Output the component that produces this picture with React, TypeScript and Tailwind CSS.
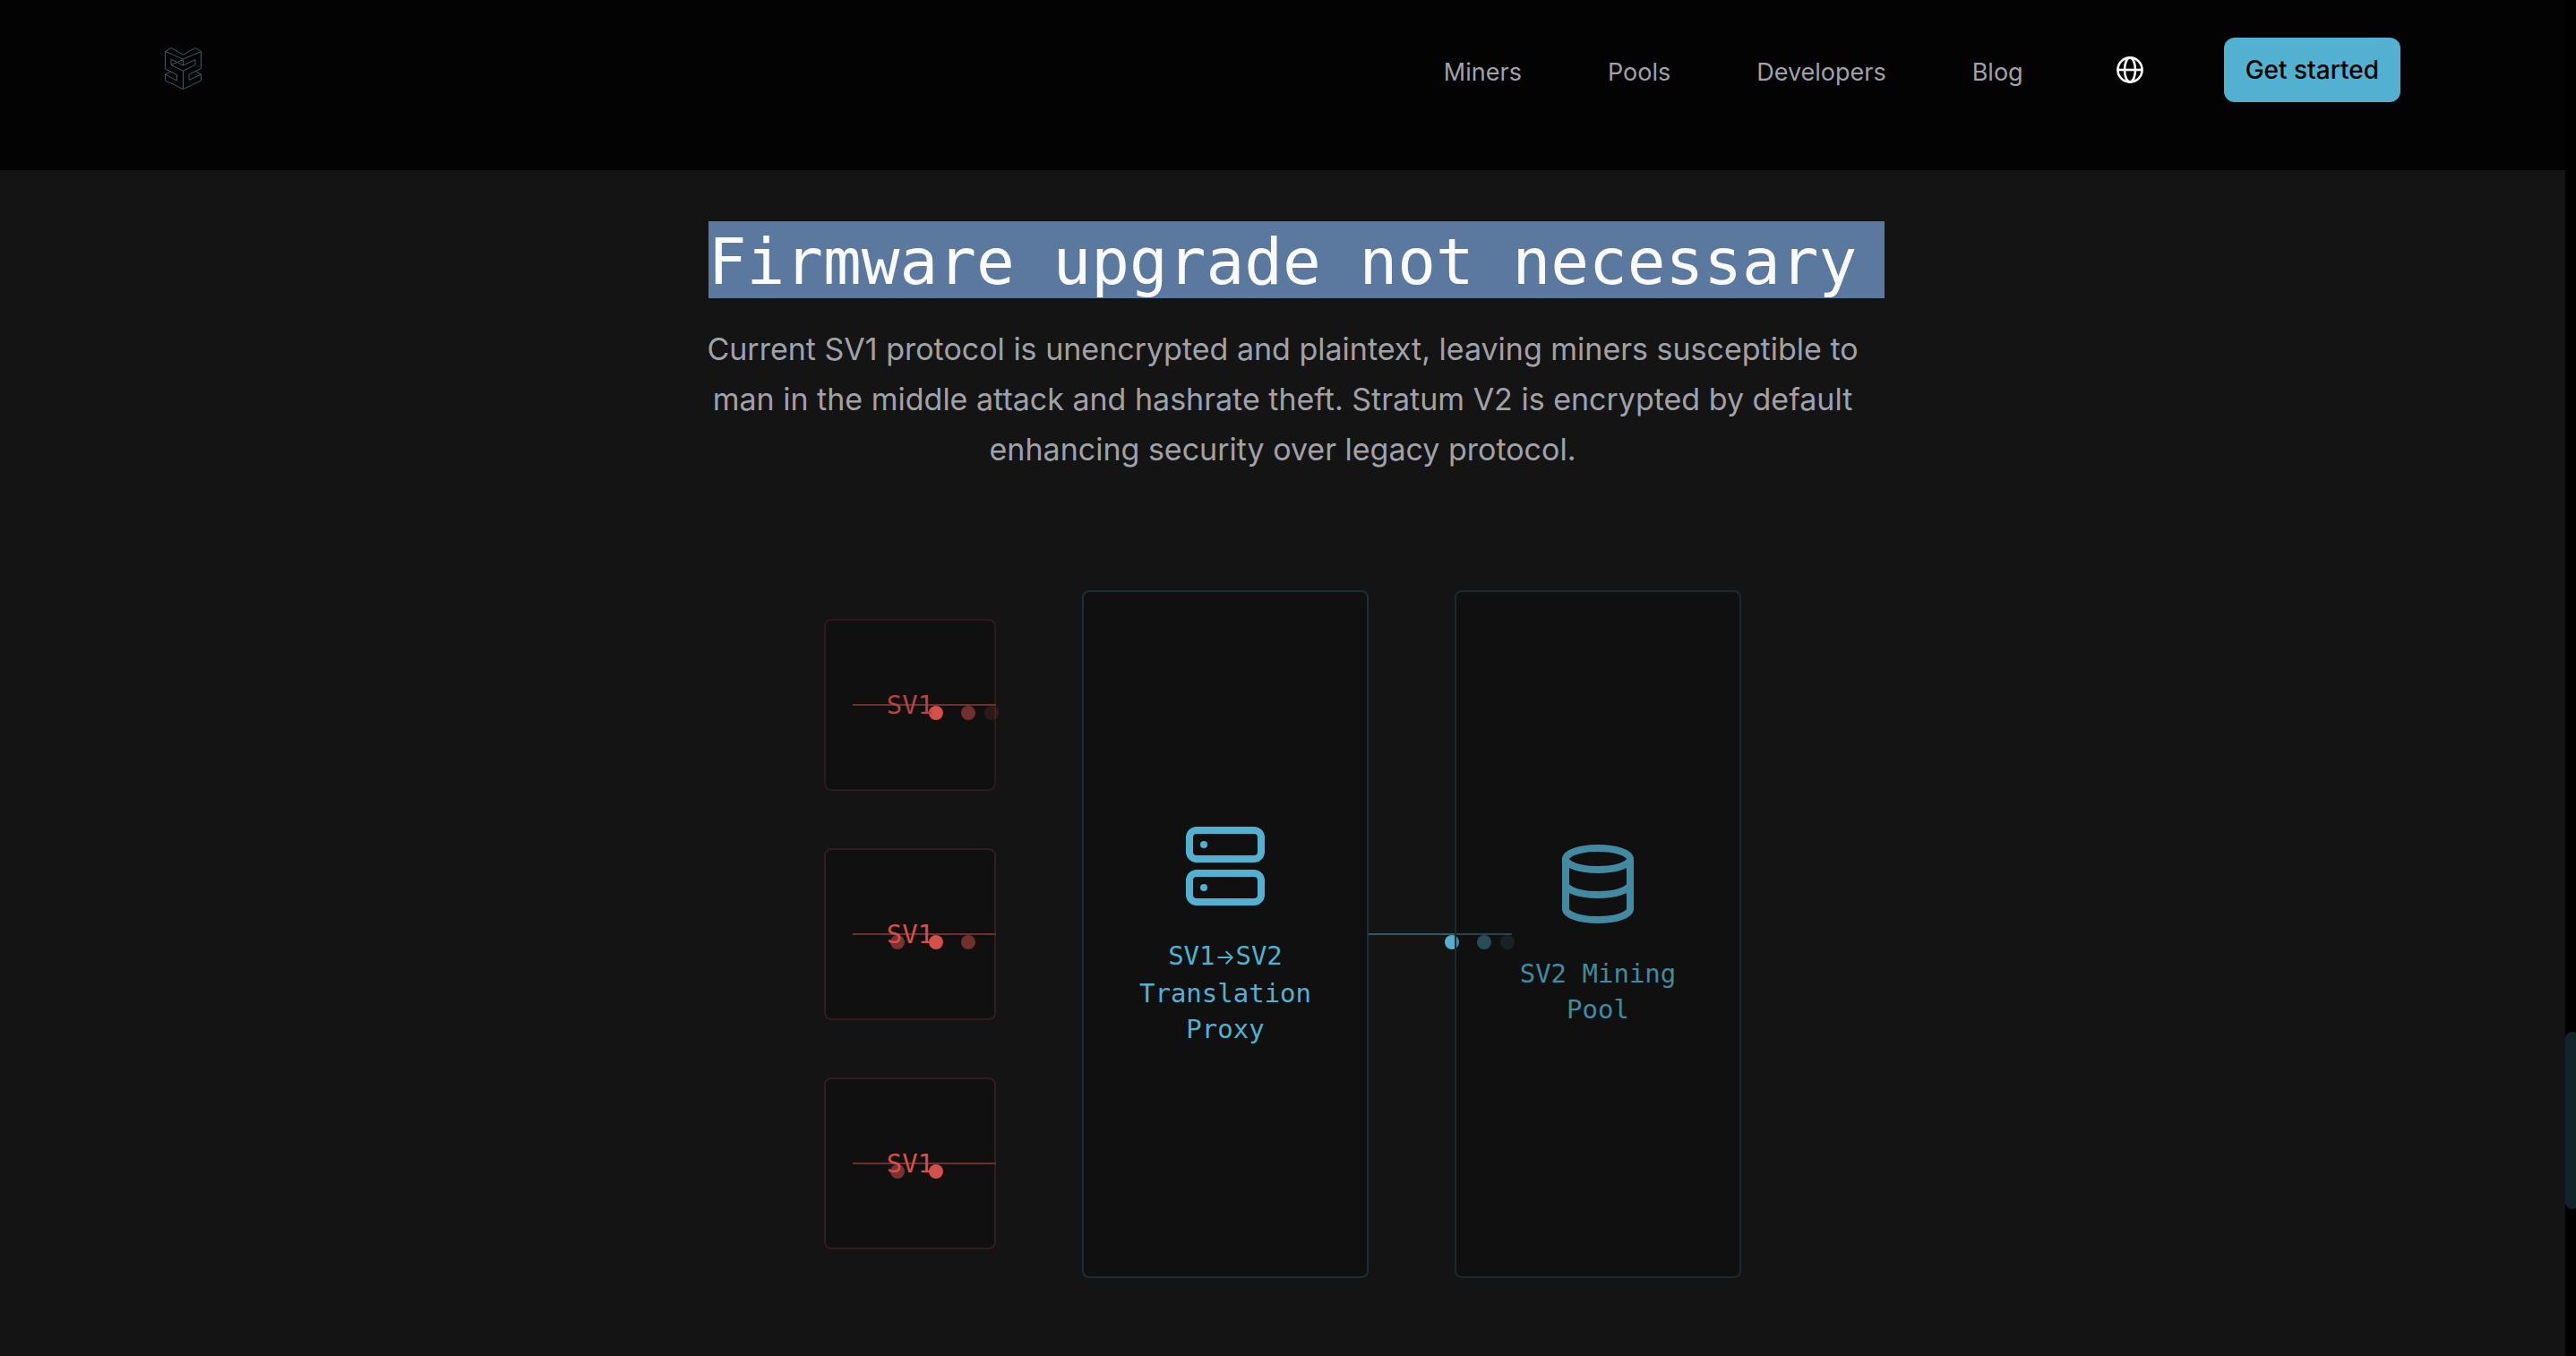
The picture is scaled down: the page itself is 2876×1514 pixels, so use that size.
import { Database, Server } from "lucide-react";

const NAV = ["Miners", "Pools", "Developers", "Blog"];

function Logo() {
  return (
    <svg width="42" height="48" viewBox="0 0 42 48" fill="none" stroke="#3f5a5e" strokeWidth="1" strokeLinejoin="round" aria-hidden="true">
      <path d="M.5 5.5 7 1.5 20.5 9 34 1.5 40.5 5.5 20.5 14Z" />
      <path d="M.5 5.5V25L13.5 31.5V38L.5 31V38L20.5 47.5 40.5 38V31L27 37.5V31L40.5 24.5V5.5" />
      <path d="M7 14 20.5 21 34 14.5V20.5L20.5 27 7 20.5ZM20.5 14V21M20.5 27V47.5M.5 31 7 27.5M40.5 31 34 27.5M7 20.5 20.5 14.5" />
    </svg>
  );
}

function Globe() {
  return (
    <svg width="30" height="30" viewBox="0 0 30 30" fill="none" stroke="#fafafa" strokeWidth="2.6" aria-hidden="true">
      <circle cx="15" cy="15" r="13.6" />
      <ellipse cx="15" cy="15" rx="6" ry="13.6" />
      <path d="M1.5 15h27" />
    </svg>
  );
}

const DOT = {
  start: "left-[42px]",
  mid: "left-[85px]",
  late: "left-[121px]",
  end: "left-[147px]",
};

type Dot = { at: keyof typeof DOT; tone: string };

function Wire({ color, dots, place }: { color: string; dots: Dot[]; place: string }) {
  return (
    <div className={`absolute h-[2px] w-40 ${place} ${color}`}>
      {dots.map((d) => (
        <span key={d.at} className={`absolute top-[2px] size-4 rounded-full ${DOT[d.at]} ${d.tone}`} />
      ))}
    </div>
  );
}

const RED: Record<string, Dot> = {
  start: { at: "start", tone: "bg-[#d4504a]/55" },
  mid: { at: "mid", tone: "bg-[#d4504a]" },
  late: { at: "late", tone: "bg-[#d4504a]/50" },
  end: { at: "end", tone: "bg-[#d4504a]/15" },
};

const MINERS = [
  { id: "a", dots: [RED.mid, RED.late, RED.end], text: "text-[#b34540]", border: "border-[#2d1b1b]" },
  { id: "b", dots: [RED.start, RED.mid, RED.late], text: "text-[#d4504a]", border: "border-[#361d1d]" },
  { id: "c", dots: [RED.start, RED.mid], text: "text-[#d4504a]", border: "border-[#361d1d]" },
];

const CYAN_DOTS: Dot[] = [
  { at: "mid", tone: "bg-[#52b1d0]" },
  { at: "late", tone: "bg-[#35606e]" },
  { at: "end", tone: "bg-[#1f2b30]" },
];

export default function App() {
  return (
    <div className="flex min-h-screen bg-black font-['Inter',sans-serif]">
      <div className="flex min-w-0 grow flex-col">
        <header className="flex h-[190px] items-start justify-between bg-[#030303] px-[184px] pt-[42px]">
          <a href="#home" aria-label="Home" className="mt-[10px]">
            <Logo />
          </a>
          <div className="flex h-[72px] items-center">
            <nav className="flex gap-24 pt-[6px] text-[27px] leading-10 text-[#a1a1aa]">
              {NAV.map((n) => (
                <a key={n} href={`#${n.toLowerCase()}`}>
                  {n}
                </a>
              ))}
            </nav>
            <button type="button" aria-label="Language" className="ml-[104px]">
              <Globe />
            </button>
            <button type="button" className="ml-[90px] h-[72px] rounded-xl bg-[#52b1d0] px-6 text-[28px] font-medium leading-10 text-[#030303]">
              Get started
            </button>
          </div>
        </header>

        <main className="flex grow flex-col items-center bg-[#141414] pt-[57px]">
          <h1 className="relative bg-[#5b789e] pt-[6px] font-['DejaVu_Sans_Mono',monospace] text-[71px] leading-[80px] text-[#fafafa]">
            Firmware upgrade not necessary
            <span className="absolute inset-y-0 left-full w-[31px] bg-[#5b789e]" />
          </h1>
          <p className="mt-[29px] w-[1310px] text-center text-[34px] leading-[56px] text-[#a1a1aa]">
            Current SV1 protocol is unencrypted and plaintext, leaving miners susceptible to man in the middle attack and hashrate theft. Stratum V2 is encrypted by default enhancing security over legacy protocol.
          </p>

          <div className="mt-[129px] flex items-center gap-24 font-['DejaVu_Sans_Mono',monospace] text-[29px] leading-10">
            <div className="flex flex-col gap-16">
              {MINERS.map((m) => (
                <div key={m.id} className={`relative flex size-48 items-center justify-center rounded-lg border-2 bg-[#101010] ${m.border}`}>
                  <Wire color="bg-[#6e2f2d]" dots={m.dots} place="-right-[2px] top-[93px]" />
                  <span className={`relative ${m.text}`}>SV1</span>
                </div>
              ))}
            </div>

            <div className="relative flex h-[768px] w-80 flex-col items-center justify-center gap-8 rounded-lg border-2 border-[#1d2f35] bg-[#101010] pt-[2px] text-center text-[#52b1d0]">
              <Server size={96} strokeWidth={2} />
              <span className="w-56">
                SV1<span className="font-['Inter',sans-serif] text-[24px]">→</span>SV2 Translation Proxy
              </span>
              <Wire color="bg-[#2f5663]" dots={CYAN_DOTS} place="left-[318px] top-[381px]" />
            </div>

            <div className="relative flex h-[768px] w-80 flex-col items-center justify-center gap-8 rounded-lg border-2 border-[#1b2a2f] bg-black/20 text-center text-[#428aa1]">
              <Database size={96} strokeWidth={2} />
              <span className="w-56">SV2 Mining Pool</span>
            </div>
          </div>
        </main>
      </div>

      <div className="flex w-3 shrink-0 flex-col bg-black pt-[1152px]">
        <div className="-mr-1 h-[198px] rounded-lg bg-[#12242a]" />
      </div>
    </div>
  );
}
